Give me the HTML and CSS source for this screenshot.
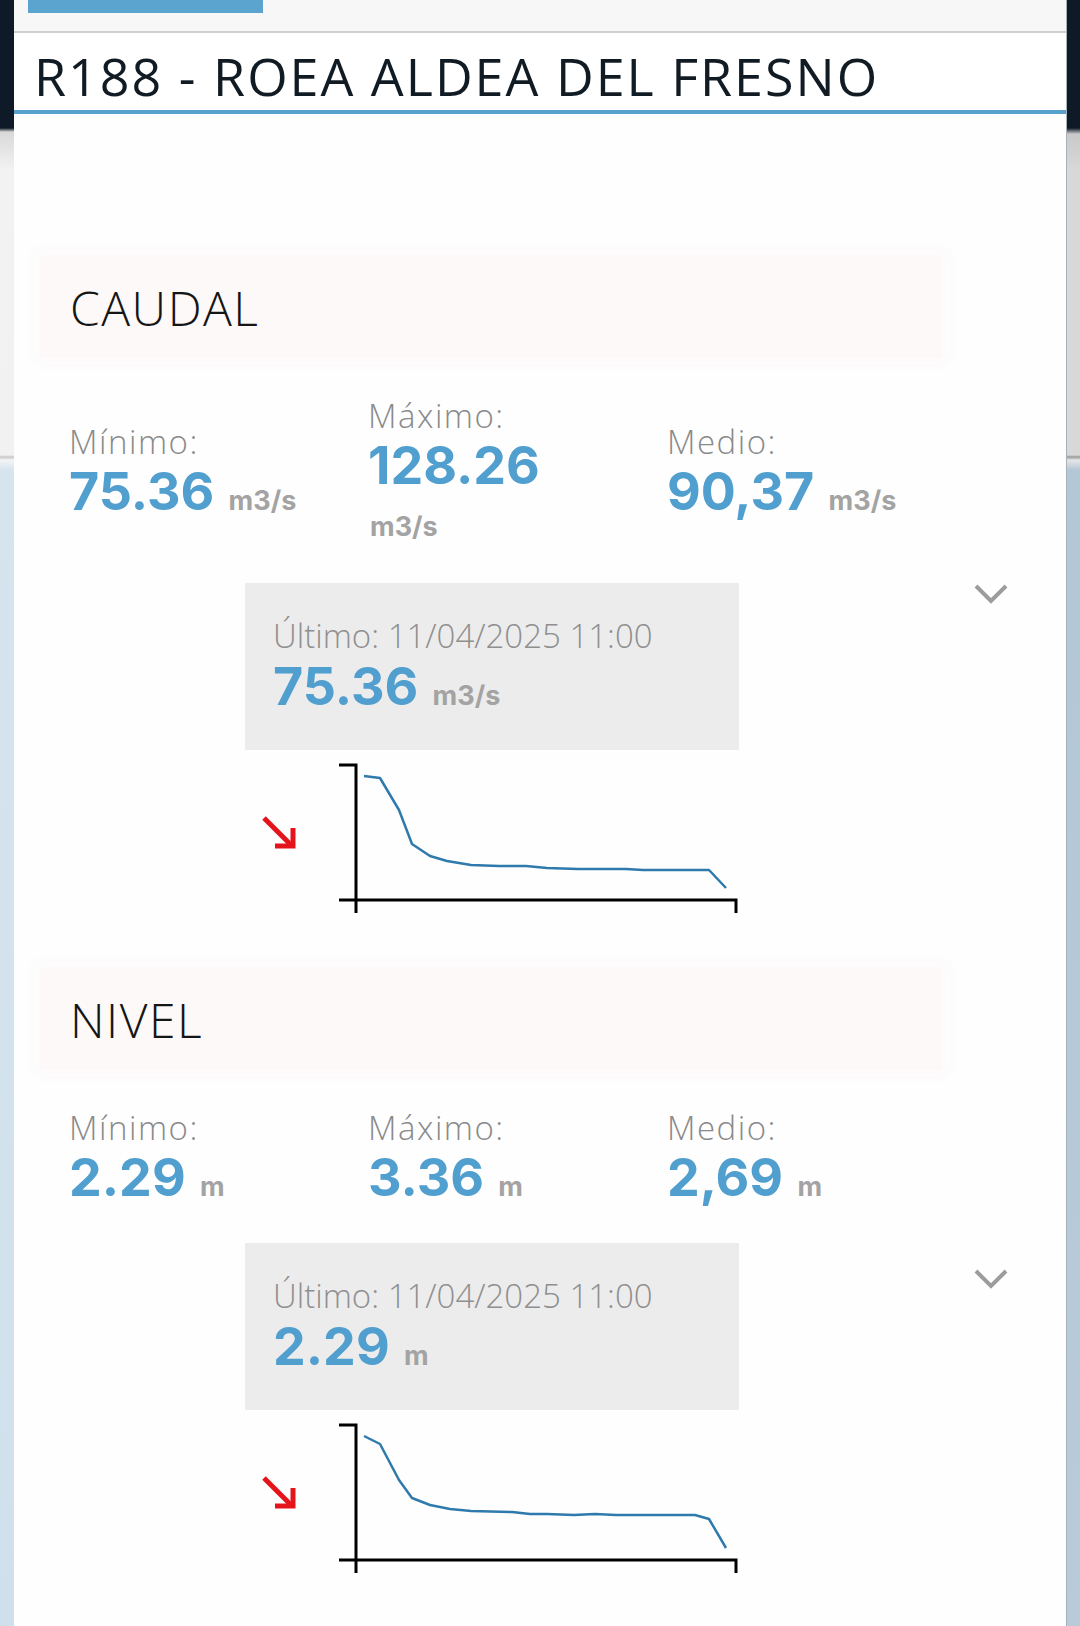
FILE: index.html
```html
<!DOCTYPE html>
<html lang="es">
<head>
    <meta charset="UTF-8">
    <meta name="viewport" content="width=device-width, initial-scale=1.0">
    <title>R188 - ROEA ALDEA DEL FRESNO</title>
    <link rel="stylesheet" href="styles.css">
</head>
<body>

<div class="page">
    <div class="side side-left"></div>

    <div class="modal">
        <div class="modal-top">
            <span class="tab"></span>
        </div>
        <h1 class="modal-title">R188 - ROEA ALDEA DEL FRESNO</h1>

        <div class="modal-body">
            <!-- Caudal -->
            <section class="section">
                <h2 class="sec-head">CAUDAL</h2>
                <div class="stats">
                    <div class="stat">
                        <span class="stat-label">Mínimo:</span>
                        <span class="stat-value">75.36 <small>m3/s</small></span>
                    </div>
                    <div class="stat stat-narrow">
                        <span class="stat-label">Máximo:</span>
                        <span class="stat-value">128.26 <small>m3/s</small></span>
                    </div>
                    <div class="stat">
                        <span class="stat-label">Medio:</span>
                        <span class="stat-value">90,37 <small>m3/s</small></span>
                    </div>
                </div>
                <div class="last-row">
                    <div class="last-box">
                        <span class="last-date">Último: 11/04/2025 11:00</span>
                        <span class="stat-value">75.36 <small>m3/s</small></span>
                    </div>
                    <svg class="chevron" width="36" height="22" viewBox="0 0 36 22">
                        <polyline points="3,3 18,18 33,3" />
                    </svg>
                </div>
                <svg class="chart" width="500" height="160" viewBox="0 0 500 160">
                    <g class="arrow">
                        <line x1="19" y1="63" x2="47" y2="91" />
                        <polyline points="30,91 48,91 48,73" />
                    </g>
                    <g class="axis">
                        <polyline points="94,10 111,10 111,158" />
                        <polyline points="94,145 491,145 491,158" />
                    </g>
                    <polyline class="serie" points="119,21 135,23 154,55 167,89 185,101 202,106 226,110 254,111 281,111 302,113 333,114 381,114 398,115 464,115 481,133" />
                </svg>
            </section>

            <!-- Nivel -->
            <section class="section">
                <h2 class="sec-head">NIVEL</h2>
                <div class="stats">
                    <div class="stat">
                        <span class="stat-label">Mínimo:</span>
                        <span class="stat-value">2.29 <small>m</small></span>
                    </div>
                    <div class="stat stat-narrow">
                        <span class="stat-label">Máximo:</span>
                        <span class="stat-value">3.36 <small>m</small></span>
                    </div>
                    <div class="stat">
                        <span class="stat-label">Medio:</span>
                        <span class="stat-value">2,69 <small>m</small></span>
                    </div>
                </div>
                <div class="last-row">
                    <div class="last-box">
                        <span class="last-date">Último: 11/04/2025 11:00</span>
                        <span class="stat-value">2.29 <small>m</small></span>
                    </div>
                    <svg class="chevron chevron-low" width="36" height="22" viewBox="0 0 36 22">
                        <polyline points="3,3 18,18 33,3" />
                    </svg>
                </div>
                <svg class="chart" width="500" height="160" viewBox="0 0 500 160">
                    <g class="arrow">
                        <line x1="19" y1="63" x2="47" y2="91" />
                        <polyline points="30,91 48,91 48,73" />
                    </g>
                    <g class="axis">
                        <polyline points="94,10 111,10 111,158" />
                        <polyline points="94,145 491,145 491,158" />
                    </g>
                    <polyline class="serie" points="119,21 135,29 154,65 167,83 185,90 205,94 226,96 267,97 285,99 302,99 329,100 350,99 371,100 450,100 464,104 481,133" />
                </svg>
            </section>
        </div>
    </div>

    <div class="side side-right"></div>
</div>

</body>
</html>
```

FILE: styles.css
```css
body {
    margin: 0;
    font-family: "Open Sans", "Liberation Sans", sans-serif;
    background: #ffffff;
}

.page {
    display: flex;
    min-height: 1626px;
}

.side {
    width: 14px;
    flex-shrink: 0;
}

.side-left {
    background: linear-gradient(to bottom, #0e1a27 0, #0e1a27 128px, #d9d9d9 132px, #f2f2f2 170px, #f1f1f1 455px, #c8c8c8 457px, #f4f4f4 460px, #d6e4ee 470px, #cfe0ec 100%);
}

.side-right {
    background: linear-gradient(to bottom, #0e1a27 0, #0e1a27 128px, #c9c9c9 134px, #d8d8d8 170px, #d8d8d8 455px, #9a9a9a 457px, #e6e6e6 460px, #b4c7d6 470px, #b9cbd9 100%);
    border-left: 1px solid #a9b1b8;
    width: 13px;
}

.modal {
    flex: 1;
    background: #fefefe;
}

.modal-top {
    height: 31px;
    background: #f7f7f7;
    border-bottom: 2px solid #cfcfcf;
}

.tab {
    display: block;
    width: 235px;
    height: 13px;
    margin-left: 14px;
    background: #5ba4d0;
}

.modal-title {
    margin: 0;
    height: 77px;
    padding-left: 20px;
    font-size: 52px;
    font-weight: 500;
    line-height: 86px;
    letter-spacing: 2px;
    color: #111b24;
    background: #ffffff;
    border-bottom: 4px solid #59a0cd;
}

.modal-body {
    padding: 142px 0 0 26px;
}

.section {
    margin-bottom: 53px;
}

.sec-head {
    margin: 0;
    width: 873px;
    height: 102px;
    padding-left: 30px;
    font-size: 48px;
    font-weight: 300;
    line-height: 104px;
    letter-spacing: 1.5px;
    color: #151515;
    background: #fdf9f8;
    box-shadow: 0 0 14px 6px #fdfafa;
}

.stats {
    display: flex;
    align-items: center;
    padding: 34px 0 30px 29px;
}

.stat {
    width: 299px;
    display: flex;
    flex-direction: column;
}

.stat-narrow .stat-value {
    width: 200px;
}

.stat-label {
    font-size: 33px;
    font-weight: 300;
    line-height: 48px;
    letter-spacing: 1.5px;
    color: #8a8a8a;
}

.stat-value {
    font-family: Inter, "Open Sans", sans-serif;
    font-size: 52px;
    font-weight: 700;
    line-height: 52px;
    color: #509fcf;
}

.stat-value small {
    font-size: 27px;
    font-weight: 700;
    color: #a3a3a3;
    margin-left: 2px;
}

.last-row {
    display: flex;
    align-items: flex-start;
}

.last-box {
    box-sizing: border-box;
    width: 494px;
    height: 167px;
    margin-left: 205px;
    padding: 28px 0 0 28px;
    background: #ececec;
    display: flex;
    flex-direction: column;
}

.last-date {
    font-size: 33px;
    font-weight: 300;
    line-height: 49px;
    color: #8f8f8f;
}

.last-box .stat-value {
    line-height: 54px;
}

.chevron {
    margin-left: 234px;
}

.chevron-low {
    margin-top: 25px;
}

.chevron polyline {
    fill: none;
    stroke: #9c9c9c;
    stroke-width: 4;
}

.chart {
    display: block;
    margin-left: 205px;
    margin-top: 5px;
}

.arrow line, .arrow polyline {
    fill: none;
    stroke: #e5141a;
    stroke-width: 5;
}

.axis polyline {
    fill: none;
    stroke: #000000;
    stroke-width: 3;
}

.serie {
    fill: none;
    stroke: #2f7aac;
    stroke-width: 2.5;
    stroke-linejoin: round;
}
```
